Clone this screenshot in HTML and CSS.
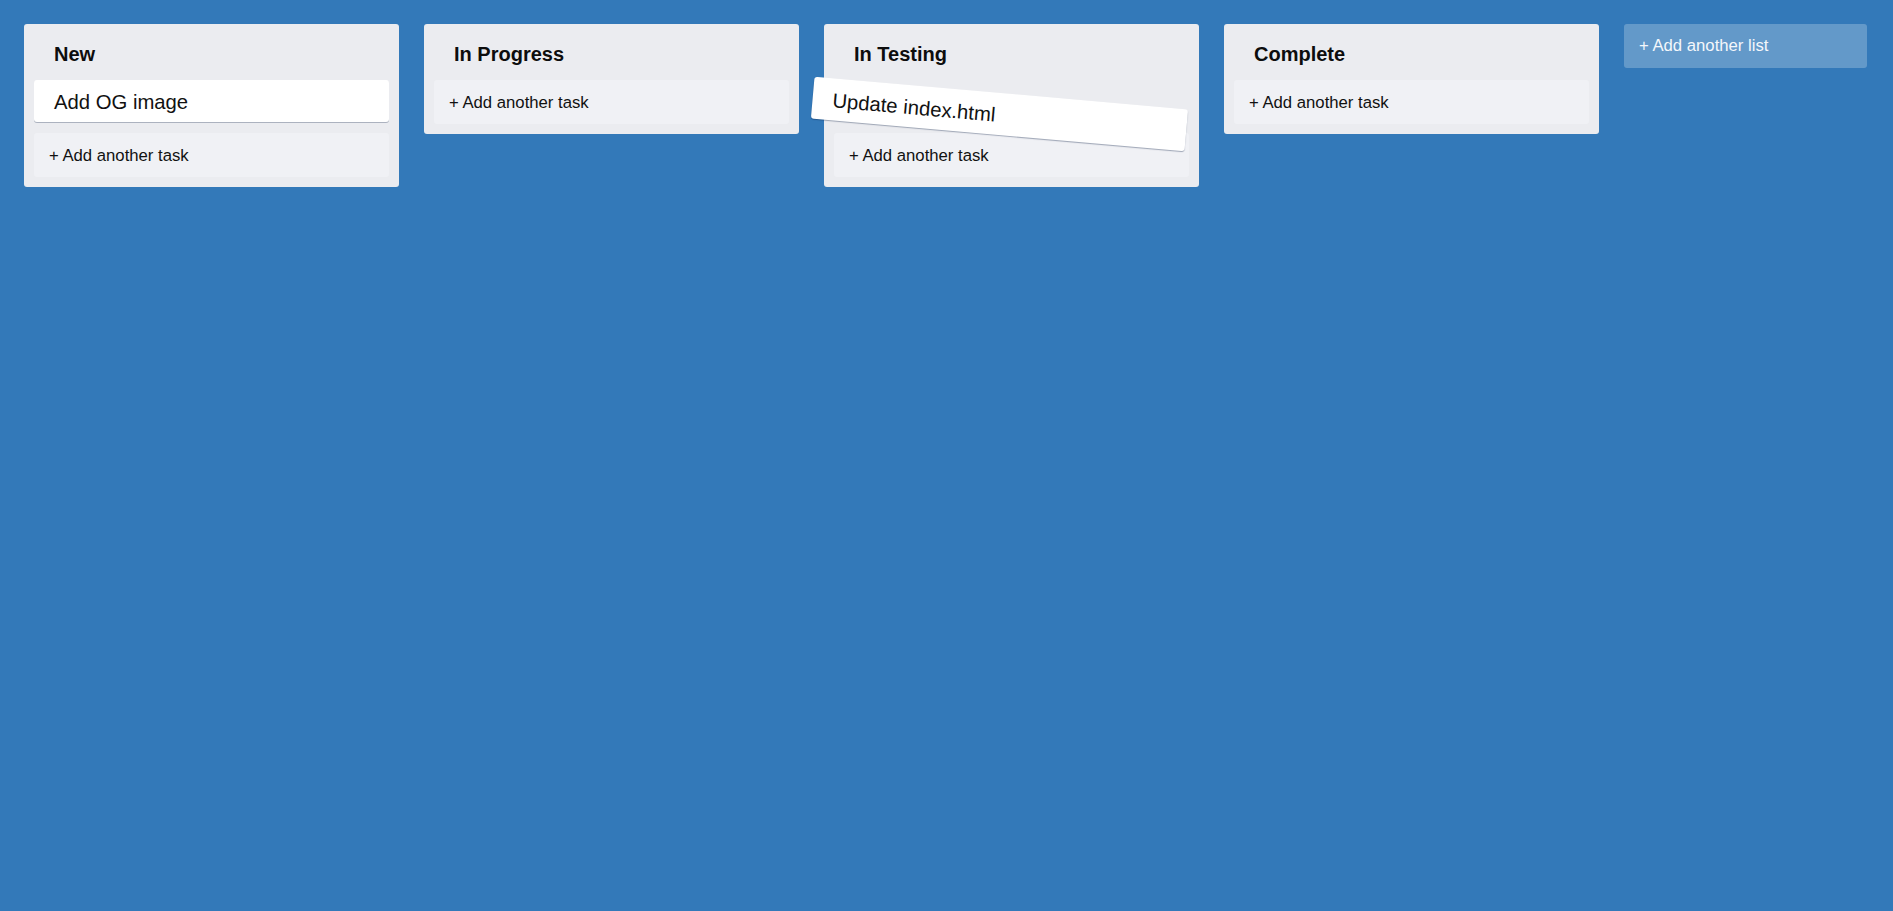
FILE: index.html
```html
<!DOCTYPE html>
<html lang="en">
<head>
<meta charset="utf-8">
<title>Board</title>
<link rel="stylesheet" href="styles.css">
</head>
<body>
<div class="board">
  <section class="list">
    <h2 class="list-title">New</h2>
    <div class="card">Add OG image</div>
    <button class="add-task">+ Add another task</button>
  </section>
  <section class="list">
    <h2 class="list-title">In Progress</h2>
    <button class="add-task">+ Add another task</button>
  </section>
  <section class="list list-drop">
    <h2 class="list-title">In Testing</h2>
    <div class="card-placeholder"></div>
    <button class="add-task">+ Add another task</button>
    <div class="card card-dragging">Update index.html</div>
  </section>
  <section class="list">
    <h2 class="list-title">Complete</h2>
    <button class="add-task">+ Add another task</button>
  </section>
  <button class="add-list">+ Add another list</button>
</div>
</body>
</html>
```
FILE: styles.css
```css
html, body {
  margin: 0;
  padding: 0;
  height: 100%;
}
body {
  background: #3379b9;
  font-family: "Liberation Sans", Arial, Helvetica, sans-serif;
  color: #111;
}
.board {
  display: flex;
  align-items: flex-start;
  gap: 25px;
  padding: 24px;
}
.list {
  position: relative;
  flex: 0 0 375px;
  box-sizing: border-box;
  background: #ebecf0;
  border-radius: 3px;
  padding: 0 10px 10px;
  display: flex;
  flex-direction: column;
}
.list-title {
  margin: 0;
  padding: 19px 20px 14px;
  font-size: 20px;
  line-height: 23px;
  font-weight: 700;
  color: #0d0d0d;
}
.card {
  box-sizing: border-box;
  height: 42px;
  background: #fff;
  border-radius: 3px;
  box-shadow: 0 1px 0 rgba(9, 30, 66, 0.28);
  padding: 11px 20px 9px;
  font-size: 20.3px;
  line-height: 22px;
  margin-bottom: 11px;
  color: #111;
}
.card-placeholder {
  height: 42px;
  margin-bottom: 11px;
}
.card-dragging {
  position: absolute;
  left: -12px;
  top: 69px;
  width: 375px;
  margin: 0;
  transform: rotate(5deg);
  box-shadow: 0 1px 1px rgba(9, 30, 66, 0.35);
}
.add-task {
  display: block;
  box-sizing: border-box;
  width: 100%;
  height: 44px;
  border: 0;
  border-radius: 3px;
  background: #f0f1f5;
  padding: 13px 15px 11px;
  text-align: left;
  font-family: inherit;
  font-size: 16.7px;
  line-height: 20px;
  color: #111;
}
.add-list {
  flex: 0 0 243px;
  box-sizing: border-box;
  height: 44px;
  border: 0;
  border-radius: 3px;
  background: rgba(255, 255, 255, 0.24);
  padding: 12px 15px;
  text-align: left;
  font-family: inherit;
  font-size: 16.7px;
  line-height: 20px;
  color: #f4f7fb;
}
```
